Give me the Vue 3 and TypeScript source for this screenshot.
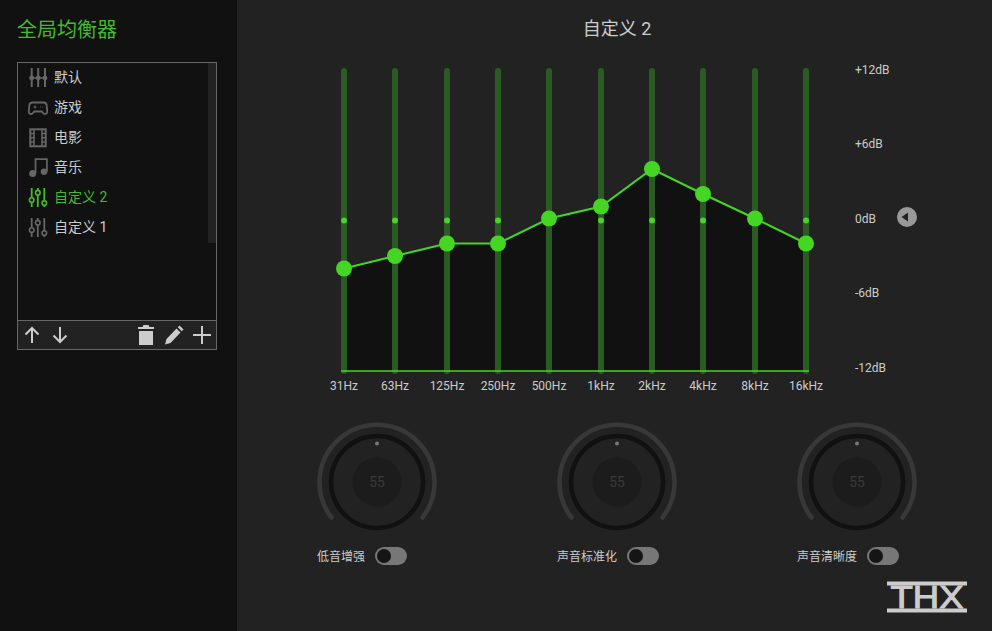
<script setup lang="ts">
interface Preset { name: string; icon: string; active?: boolean }
const presets: Preset[] = [
  { name: '默认', icon: 'mixer' },
  { name: '游戏', icon: 'game' },
  { name: '电影', icon: 'film' },
  { name: '音乐', icon: 'music' },
  { name: '自定义 2', icon: 'sliders', active: true },
  { name: '自定义 1', icon: 'sliders' },
]
const xs = [344, 395, 447, 498, 549, 601, 652, 703, 755, 806]
const ys = [268.5, 256, 243.5, 243.5, 218.5, 206.5, 169, 194, 218.5, 243.5]
const freqs = ['31Hz', '63Hz', '125Hz', '250Hz', '500Hz', '1kHz', '2kHz', '4kHz', '8kHz', '16kHz']
const dbs = [
  { t: '+12dB', y: 70 },
  { t: '+6dB', y: 144 },
  { t: '0dB', y: 219 },
  { t: '-6dB', y: 293 },
  { t: '-12dB', y: 368 },
]
const OX = 237
const OY = 50
const line = xs.map((x, i) => `${x - OX},${ys[i] - OY}`).join(' ')
const area = `${344 - OX},${371 - OY} ${line} ${806 - OX},${371 - OY}`
const knobs = ['低音增强', '声音标准化', '声音清晰度']
</script>

<template>
  <div class="app">
    <aside class="side">
      <h1 class="heading">全局均衡器</h1>
      <div class="box">
        <div class="list">
          <ul class="rows">
            <li v-for="p in presets" :key="p.name" class="row" :class="{ on: p.active }">
              <svg class="ico" width="20" height="22" viewBox="0 0 20 22" fill="none" stroke="currentColor" stroke-width="2">
                <g v-if="p.icon === 'mixer'">
                  <path d="M3.700 2v19M10.200 2v19M17 2v19" />
                  <path d="M1.500 12h17" stroke-width="1.500" />
                  <circle cx="3.700" cy="12" r="2.400" fill="currentColor" stroke="none" />
                  <circle cx="10.200" cy="12" r="2.400" fill="currentColor" stroke="none" />
                  <circle cx="17" cy="12" r="2.400" fill="currentColor" stroke="none" />
                </g>
                <g v-else-if="p.icon === 'game'">
                  <path d="M4.500 6.500h11c1.800 0 2.800.9 3.100 2.500l.6 6c.2 1.900-.8 3-2.200 3-1 0-1.600-.4-2.200-1.200l-1-1.300H6.200l-1 1.300c-.6.8-1.200 1.200-2.200 1.200-1.400 0-2.400-1.100-2.200-3l.6-6c.3-1.600 1.300-2.500 3.100-2.500z" stroke-width="1.800" />
                  <path d="M5.500 11h3M7 9.500v3M12 11h.8M14.500 11h.8" stroke-width="1.100" />
                </g>
                <g v-else-if="p.icon === 'film'">
                  <rect x="2.300" y="3.300" width="15.400" height="17" />
                  <path d="M6 3.300v17M14 3.300v17M2 7.500h4M2 11.800h4M2 16h4M14 7.500h4M14 11.800h4M14 16h4" stroke-width="1.600" />
                </g>
                <g v-else-if="p.icon === 'music'">
                  <path d="M7.500 17V3.200h11.400v12.500" stroke-width="1.700" />
                  <circle cx="4.700" cy="17.500" r="3.500" fill="currentColor" stroke="none" />
                  <circle cx="16" cy="15.800" r="3.300" fill="currentColor" stroke="none" />
                </g>
                <g v-else stroke-width="1.800">
                  <path d="M3.700 2v19M9.800 2v19M16.300 2v19" />
                  <circle cx="3.700" cy="14" r="2.300" fill="#111" stroke-width="1.600" />
                  <circle cx="9.800" cy="6.700" r="2.300" fill="#111" stroke-width="1.600" />
                  <circle cx="16.300" cy="17" r="2.300" fill="#111" stroke-width="1.600" />
                </g>
              </svg>
              <span class="name">{{ p.name }}</span>
            </li>
          </ul>
          <div class="scroll"></div>
        </div>
        <div class="tools">
          <svg width="20" height="20" viewBox="0 0 20 20" fill="none" stroke="#ccc" stroke-width="2"><path d="M10 18V3M3.500 9.500 10 3l6.500 6.500" /></svg>
          <svg class="ml8" width="20" height="20" viewBox="0 0 20 20" fill="none" stroke="#ccc" stroke-width="2"><path d="M10 2v15M3.500 10.500 10 17l6.500-6.500" /></svg>
          <svg class="push" width="20" height="20" viewBox="0 0 20 20" fill="#ccc"><path d="M7.500 0h5l1 2H18v2H2V2h4.500zM3 6h14v14H3z" /></svg>
          <svg class="ml8" width="20" height="20" viewBox="0 0 20 20" fill="#ccc"><path d="M1 19.500l1.500-5.500L12.500 3.500l4 4L6.500 18zM13.800 2.200 15.500.5 19.500 4.500l-1.700 1.700z" /></svg>
          <svg class="ml8" width="20" height="20" viewBox="0 0 20 20" fill="none" stroke="#ccc" stroke-width="2"><path d="M10 1v18M1 10h18" /></svg>
        </div>
      </div>
    </aside>
    <main class="main">
      <h2 class="title">自定义 2</h2>
      <svg class="chart" width="755" height="350" viewBox="0 0 755 350">
        <polygon :points="area" fill="#111" />
        <g v-for="(x, i) in xs" :key="x">
          <line :x1="x - OX" :x2="x - OX" y1="21" y2="321" stroke="#2c5a24" stroke-width="6" stroke-linecap="round" />
          <circle :cx="x - OX" cy="170.500" r="3" fill="#44d622" />
          <text :x="x - OX" y="340" text-anchor="middle" class="lbl">{{ freqs[i] }}</text>
        </g>
        <line x1="104" x2="572" y1="321" y2="321" stroke="#44d622" stroke-width="1.500" />
        <polyline :points="line" fill="none" stroke="#44d622" stroke-width="2" />
        <circle v-for="(x, i) in xs" :key="'p' + x" :cx="x - OX" :cy="ys[i] - OY" r="8" fill="#44d622" />
        <text v-for="d in dbs" :key="d.t" x="618" :y="d.y - OY + 4" class="lbl">{{ d.t }}</text>
        <circle cx="670" cy="167" r="10" fill="#999" />
        <path d="M664.500 167l6.500-4.500v9z" fill="#222" />
      </svg>
      <div class="knobs">
        <div v-for="k in knobs" :key="k" class="unit">
          <svg class="knob" width="120" height="120" viewBox="0 0 120 120" fill="none">
            <path d="M14.500 95.500A57.500 57.500 0 1 1 105.500 95.500" stroke="#383838" stroke-width="4.500" stroke-linecap="round" />
            <circle cx="60" cy="60" r="46" stroke="#111" stroke-width="4.500" />
            <circle cx="60" cy="60" r="24.500" fill="#1c1c1c" />
            <circle cx="60" cy="21.500" r="2" fill="#777" />
            <text x="60" y="65" text-anchor="middle" class="val">55</text>
          </svg>
          <div class="ctl">
            <span class="cap">{{ k }}</span>
            <span class="toggle"><span class="dot"></span></span>
          </div>
        </div>
      </div>
      <svg class="thx" width="90" height="40" viewBox="0 0 90 40">
        <text x="5.500" y="30" textLength="73" lengthAdjust="spacingAndGlyphs" class="brand">THX</text>
        <rect x="2" y="3.500" width="80" height="4" fill="#ccc" />
        <rect x="2" y="30.500" width="80" height="4" fill="#ccc" />
      </svg>
    </main>
  </div>
</template>

<style scoped>
.app {
  display: flex;
  width: 992px;
  height: 631px;
  overflow: hidden;
  background: #222;
  font-family: Roboto, "Noto Sans CJK SC", sans-serif;
}
.side {
  width: 237px;
  flex: none;
  box-sizing: border-box;
  background: #111;
  padding: 0 20px 0 17px;
}
.heading {
  margin: 0;
  height: 62px;
  line-height: 60px;
  font-size: 20px;
  font-weight: 400;
  color: #44bb2c;
}
.box {
  height: 288px;
  box-sizing: border-box;
  border: 1px solid #666;
  display: flex;
  flex-direction: column;
}
.list {
  flex: 1;
  display: flex;
  min-height: 0;
}
.rows {
  flex: 1;
  list-style: none;
  margin: 0;
  padding: 0;
}
.row {
  height: 30px;
  display: flex;
  align-items: center;
  padding-left: 10px;
  gap: 6px;
  margin-top: -1px;
  margin-bottom: 1px;
  font-size: 14px;
  color: #ccc;
}
.row .name {
  margin-bottom: 2px;
}
.row .ico {
  color: #666;
}
.row.on,
.row.on .ico {
  color: #44bb2c;
}
.scroll {
  width: 8px;
  height: 180px;
  background: #222;
}
.tools {
  height: 29px;
  flex: none;
  box-sizing: border-box;
  border-top: 1px solid #666;
  background: #222;
  display: flex;
  align-items: center;
  padding: 0 4px;
}
.ml8 {
  margin-left: 8px;
}
.push {
  margin-left: auto;
}
.main {
  flex: 1;
  min-width: 0;
  display: flex;
  flex-direction: column;
}
.title {
  margin: 0;
  height: 50px;
  padding-left: 5px;
  box-sizing: border-box;
  line-height: 58px;
  text-align: center;
  font-size: 18px;
  font-weight: 400;
  color: #ccc;
}
.chart {
  display: block;
  flex: none;
}
.lbl {
  font-family: Roboto, sans-serif;
  font-size: 12px;
  fill: #ccc;
}
.val {
  font-family: Roboto, sans-serif;
  font-size: 14px;
  fill: #3a3a3a;
}
.knobs {
  display: flex;
  gap: 120px;
  margin-top: 22px;
  padding-left: 80px;
}
.unit {
  width: 120px;
}
.knob {
  display: block;
}
.ctl {
  display: flex;
  align-items: center;
  gap: 10px;
  margin-top: 4px;
  height: 20px;
}
.cap {
  font-size: 12px;
  color: #ccc;
  white-space: nowrap;
  margin-bottom: 2px;
}
.toggle {
  flex: none;
  display: block;
  box-sizing: border-box;
  width: 32px;
  height: 18px;
  padding: 2px;
  border-radius: 9px;
  background: #777;
}
.dot {
  display: block;
  width: 14px;
  height: 14px;
  border-radius: 50%;
  background: #151515;
}
.thx {
  align-self: flex-end;
  margin: 12px 17px 0 0;
  display: block;
  flex: none;
}
.brand {
  font-family: "Liberation Sans", sans-serif;
  font-size: 32px;
  fill: #ccc;
  stroke: #ccc;
  stroke-width: 1px;
}
</style>

<style>
html,
body {
  margin: 0;
  background: #222;
}
</style>
